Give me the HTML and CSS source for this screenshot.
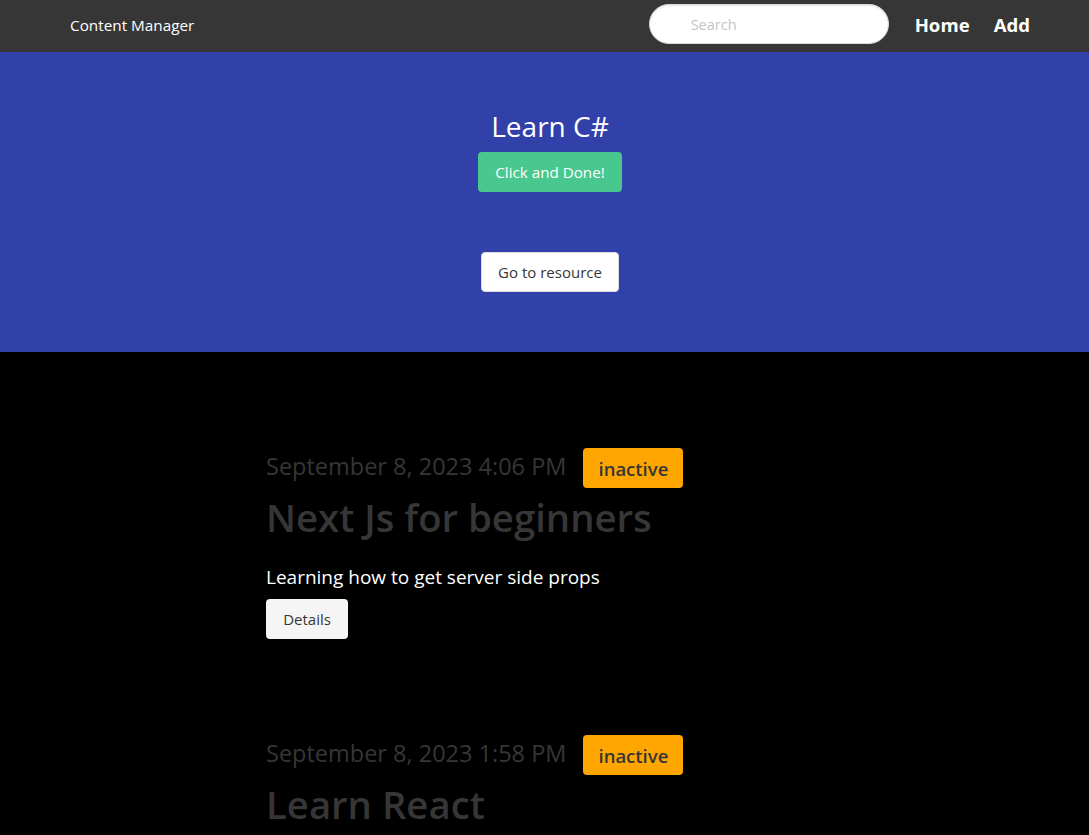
FILE: index.html
```html
<!DOCTYPE html>
<html>
<head>
<meta charset="utf-8">
<link rel="stylesheet" href="styles.css">
</head>
<body>
<nav class="navbar">
  <div class="brand">Content Manager</div>
  <div class="nav-end">
    <div class="search"><span class="placeholder">Search</span></div>
    <a class="nav-link">Home</a>
    <a class="nav-link">Add</a>
  </div>
</nav>
<section class="hero">
  <h1 class="hero-title">Learn C#</h1>
  <button class="btn btn-success">Click and Done!</button>
  <button class="btn btn-white">Go to resource</button>
</section>
<section class="list">
  <article class="item">
    <div class="meta">
      <span class="date">September 8, 2023 4:06 PM</span>
      <span class="tag">inactive</span>
    </div>
    <h2 class="item-title">Next Js for beginners</h2>
    <p class="desc">Learning how to get server side props</p>
    <button class="btn btn-light">Details</button>
  </article>
  <article class="item">
    <div class="meta">
      <span class="date">September 8, 2023 1:58 PM</span>
      <span class="tag">inactive</span>
    </div>
    <h2 class="item-title">Learn React</h2>
  </article>
</section>
</body>
</html>
```
FILE: styles.css
```css
* { box-sizing: border-box; }
html, body { margin: 0; padding: 0; }
body {
  font-family: "Open Sans", "Noto Sans", sans-serif;
  background: #000;
  color: #4a4a4a;
  overflow: hidden;
  height: 835px;
}
.navbar {
  height: 52px;
  background: #363636;
  display: flex;
  align-items: center;
  justify-content: space-between;
  padding: 0 47px 2px 70px;
}
.brand { color: #fff; font-size: 15.3px; }
.nav-end { display: flex; align-items: center; }
.search {
  width: 240px;
  height: 40px;
  background: #fff;
  border: 1px solid #dbdbdb;
  border-radius: 9999px;
  box-shadow: inset 0 1px 2px rgba(10,10,10,0.1);
  display: flex;
  align-items: center;
  padding-left: 41px;
  margin: 0 14px 2px 0;
}
.placeholder { color: #c4c4c4; font-size: 14.5px; }
.nav-link {
  color: #fff;
  font-weight: 700;
  font-size: 18.6px;
  padding: 0 12px;
  margin-bottom: 2px;
}
.hero {
  height: 300px;
  background: #3240a9;
  display: flex;
  flex-direction: column;
  align-items: center;
  padding: 54px 0 0 11px;
}
.hero-title {
  margin: 0;
  color: #fff;
  font-weight: 400;
  font-size: 28px;
  line-height: 40px;
}
.btn {
  font-family: inherit;
  height: 40px;
  border-radius: 4px;
  font-size: 15px;
  padding: 0 12px;
  border: 1px solid transparent;
  cursor: pointer;
}
.btn-success {
  margin-top: 6px;
  background: #48c78e;
  color: #fff;
  width: 144px;
  font-size: 15.2px;
}
.btn-white {
  margin-top: 60px;
  background: #fff;
  border-color: #dbdbdb;
  color: #363636;
  width: 138px;
}
.list { padding: 96px 0 0 266px; }
.item { margin-bottom: 96px; }
.meta { display: flex; align-items: center; height: 40px; }
.date { color: #363636; font-size: 23.5px; font-weight: 400; position: relative; top: -2px; }
.tag {
  margin-left: 17px;
  background: #ffa500;
  color: #363636;
  height: 40px;
  width: 100px;
  border-radius: 4px;
  display: flex;
  align-items: center;
  justify-content: center;
  font-size: 18.5px;
  font-weight: 600;
}
.item-title {
  margin: 4px 0 0;
  color: #363636;
  font-size: 38.3px;
  font-weight: 600;
  line-height: 50px;
}
.desc {
  margin: 22px 0 9px;
  color: #fff;
  font-size: 19px;
  line-height: 26px;
}
.btn-light {
  background: #f5f5f5;
  color: #363636;
  width: 82px;
}
```
